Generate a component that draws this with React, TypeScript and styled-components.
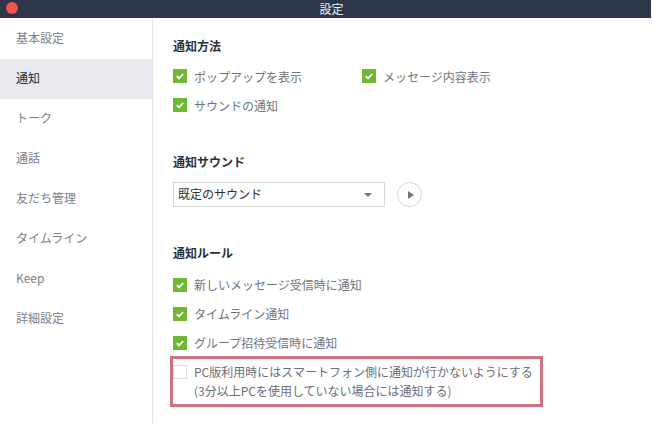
import React from "react";
import styled, { createGlobalStyle } from "styled-components";

const Global = createGlobalStyle`
  html, body { margin: 0; padding: 0; background: #fff; }
  body { font-family: "Noto Sans CJK JP", "Liberation Sans", sans-serif; }
`;

const Window = styled.div`
  width: 651px;
  height: 424px;
  display: flex;
  flex-direction: column;
  overflow: hidden;
`;

const TitleBar = styled.header`
  position: relative;
  height: 18px;
  flex: none;
  box-sizing: border-box;
  padding-left: 12px;
  background: #2d3648;
  color: #f2f3f5;
  font-size: 12px;
  line-height: 17px;
  text-align: center;
`;

const CloseDot = styled.span`
  position: absolute;
  left: 6px;
  top: 2px;
  width: 12px;
  height: 12px;
  border-radius: 50%;
  background: #f0564a;
`;

const Body = styled.div`
  flex: 1;
  display: flex;
  min-height: 0;
`;

const Sidebar = styled.nav`
  width: 152px;
  flex: none;
  padding-top: 1px;
  border-right: 1px solid #e6e7ea;
`;

const NavItem = styled.div<{ $active?: boolean }>`
  height: 40px;
  line-height: 38px;
  padding-left: 16px;
  font-size: 12px;
  color: ${(p) => (p.$active ? "#22262e" : "#7b7f88")};
  background: ${(p) => (p.$active ? "#e8eaf0" : "transparent")};
`;

const Content = styled.main`
  flex: 1;
  padding: 19px 0 0 20px;
`;

const Section = styled.section<{ $gap: number }>`
  margin-bottom: ${(p) => p.$gap}px;
`;

const Heading = styled.h2`
  margin: 0;
  height: 18px;
  font-size: 12px;
  line-height: 18px;
  font-weight: 700;
  color: #2b2f38;
`;

const OptionGrid = styled.div<{ $top: number }>`
  margin-top: ${(p) => p.$top}px;
  display: grid;
  grid-template-columns: 189px auto;
  grid-auto-rows: 29px;
  justify-content: start;
`;

const Option = styled.label<{ $lineHeight: number }>`
  display: flex;
  align-items: flex-start;
  gap: 7px;
  font-size: 12px;
  line-height: ${(p) => p.$lineHeight}px;
  color: #70747d;
`;

const Box = styled.span<{ $checked?: boolean }>`
  width: 14px;
  height: 14px;
  flex: none;
  box-sizing: border-box;
  display: flex;
  align-items: center;
  justify-content: center;
  background: ${(p) => (p.$checked ? "#6fb831" : "#fff")};
  border: ${(p) => (p.$checked ? "none" : "1px solid #dcdee2")};
`;

const SoundRow = styled.div`
  margin-top: 11px;
  display: flex;
  align-items: center;
  gap: 12px;
`;

const Select = styled.div`
  width: 212px;
  height: 25px;
  box-sizing: border-box;
  border: 1px solid #d5d7db;
  padding: 0 12px 2px 4px;
  display: flex;
  align-items: center;
  justify-content: space-between;
  font-size: 12px;
  color: #2b2f38;
`;

const Caret = styled.span`
  width: 0;
  height: 0;
  margin-top: 2px;
  border-left: 4px solid transparent;
  border-right: 4px solid transparent;
  border-top: 4px solid #73777f;
`;

const PlayButton = styled.div`
  width: 25px;
  height: 25px;
  box-sizing: border-box;
  border: 1px solid #d5d7db;
  border-radius: 50%;
  display: flex;
  align-items: center;
  justify-content: center;
  padding-left: 2px;
`;

const PlayGlyph = styled.span`
  width: 0;
  height: 0;
  border-top: 4px solid transparent;
  border-bottom: 4px solid transparent;
  border-left: 6px solid #71757d;
`;

const Highlight = styled.div`
  margin: -9px 0 0 -3px;
  width: 373px;
  height: 51px;
  box-sizing: border-box;
  border: 3px solid #d0717f;
  padding: 3px 0 0 0;
  display: flex;
  gap: 7px;
  font-size: 12px;
  line-height: 19px;
  color: #6a6e77;
`;

const HighlightBox = styled(Box)`
  margin-top: 3px;
`;

const Check = () => (
  <svg width="10" height="10" viewBox="0 0 10 10" aria-hidden="true">
    <path d="M1.8 5.2 4 7.4 8.2 3" fill="none" stroke="#fff" strokeWidth="1.8" />
  </svg>
);

const CheckOption = ({ children, lineHeight = 16 }: { children: React.ReactNode; lineHeight?: number }) => (
  <Option $lineHeight={lineHeight}>
    <Box $checked>
      <Check />
    </Box>
    {children}
  </Option>
);

const nav = ["基本設定", "通知", "トーク", "通話", "友だち管理", "タイムライン", "Keep", "詳細設定"];

export default function App() {
  return (
    <Window>
      <Global />
      <TitleBar>
        <CloseDot />
        設定
      </TitleBar>
      <Body>
        <Sidebar>
          {nav.map((n) => (
            <NavItem key={n} $active={n === "通知"}>
              {n}
            </NavItem>
          ))}
        </Sidebar>
        <Content>
          <Section $gap={26}>
            <Heading>通知方法</Heading>
            <OptionGrid $top={14}>
              <CheckOption>ポップアップを表示</CheckOption>
              <CheckOption>メッセージ内容表示</CheckOption>
              <CheckOption>サウンドの通知</CheckOption>
            </OptionGrid>
          </Section>
          <Section $gap={37}>
            <Heading>通知サウンド</Heading>
            <SoundRow>
              <Select>
                既定のサウンド
                <Caret />
              </Select>
              <PlayButton>
                <PlayGlyph />
              </PlayButton>
            </SoundRow>
          </Section>
          <Section $gap={0}>
            <Heading>通知ルール</Heading>
            <OptionGrid $top={16}>
              <CheckOption lineHeight={14}>新しいメッセージ受信時に通知</CheckOption>
              <span />
              <CheckOption lineHeight={14}>タイムライン通知</CheckOption>
              <span />
              <CheckOption lineHeight={14}>グループ招待受信時に通知</CheckOption>
            </OptionGrid>
            <Highlight>
              <HighlightBox />
              <div>
                PC版利用時にはスマートフォン側に通知が行かないようにする
                <br />
                (3分以上PCを使用していない場合には通知する)
              </div>
            </Highlight>
          </Section>
        </Content>
      </Body>
    </Window>
  );
}
